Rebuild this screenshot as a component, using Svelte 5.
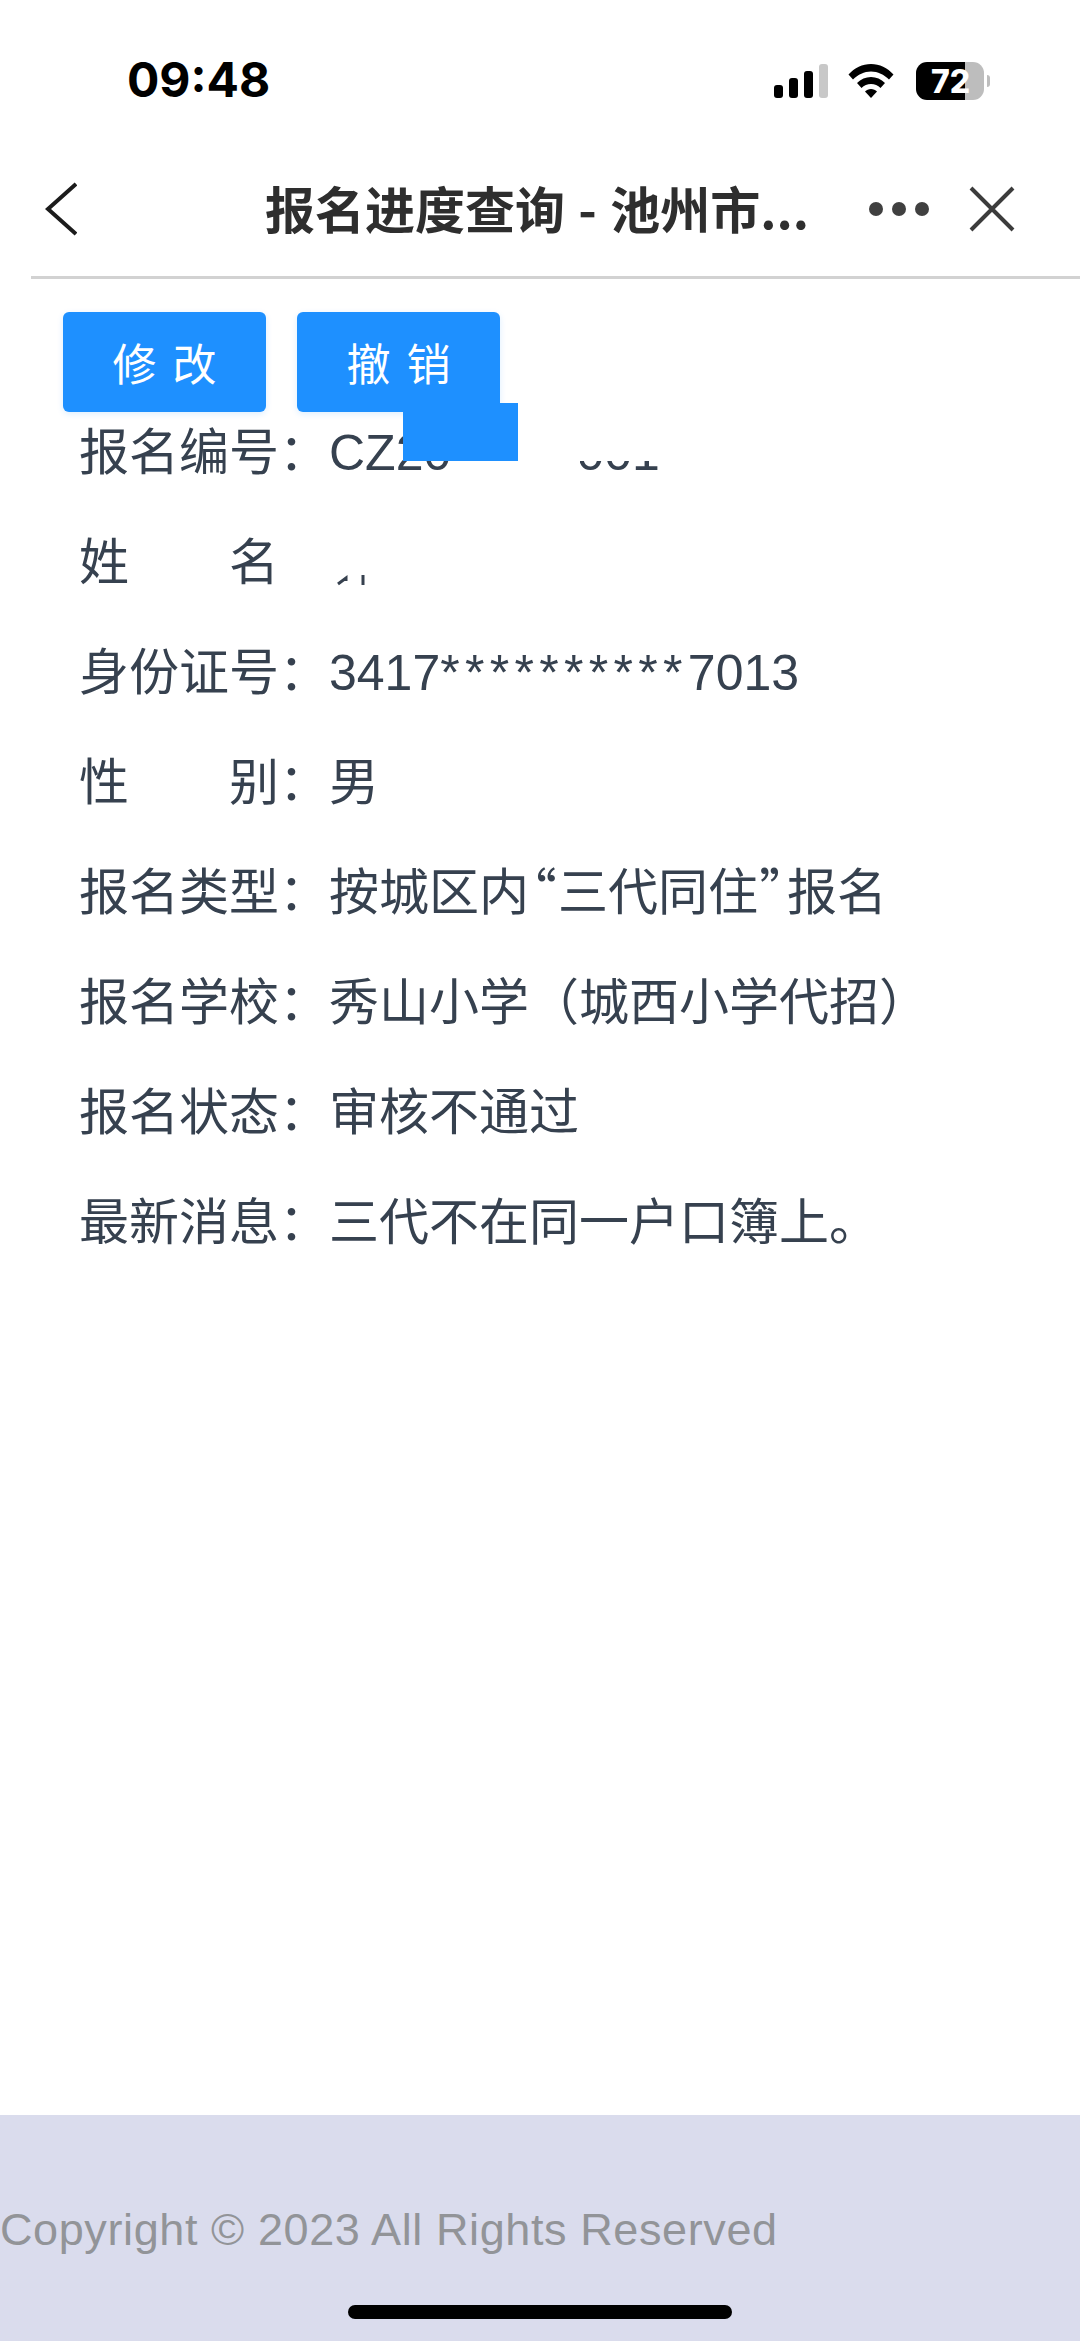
<script>
  const rows = [
    { label: '报名编号', value: 'CZ20 2300001', colon: true },
    { label: '姓名', value: '', colon: false },
    { label: '身份证号', value: '3417**********7013', colon: true },
    { label: '性别', value: '男', colon: true },
    { label: '报名类型', value: '按城区内“三代同住”报名', colon: true },
    { label: '报名学校', value: '秀山小学（城西小学代招）', colon: true },
    { label: '报名状态', value: '审核不通过', colon: true },
    { label: '最新消息', value: '三代不在同一户口簿上。', colon: true }
  ];

  // 引号和星号在原图里更宽，单独包一层
  function split(value) {
    return value.split(/(“|”|\*+)/).filter(Boolean);
  }
</script>

<div class="page">
  <div class="status">
    <span class="time">09:48</span>
    <div class="status-icons">
      <div class="signal">
        <i style="height: 13px"></i>
        <i style="height: 20px"></i>
        <i style="height: 27px"></i>
        <i class="off" style="height: 34px"></i>
      </div>
      <svg class="wifi" width="46" height="34" viewBox="0 0 46 34">
        <path d="M0.5 10.5C6.5 4 14.5 0 23 0s16.5 4 22.500 10.500l-4.500 5C36 10.500 29.800 7.500 23 7.500S10 10.500 5 15.500z" fill="#000"/>
        <path d="M9 19C12.800 15 17.800 13 23 13s10.200 2 14 6l-4.500 5C30 21.500 26.600 20 23 20s-7 1.500-9.500 4z" fill="#000"/>
        <path d="M17 27.500C18.500 26 20.700 25 23 25s4.500 1 6 2.500L23 34z" fill="#000"/>
      </svg>
      <div class="battery">
        <div class="battery-body"><span>72</span></div>
        <div class="battery-nub"></div>
      </div>
    </div>
  </div>

  <div class="nav">
    <svg class="back" width="32" height="54" viewBox="0 0 32 54">
      <path d="M31 2 3 27l28 25" fill="none" stroke="#1c1c1c" stroke-width="4"/>
    </svg>
    <div class="title">报名进度查询 - 池州市...</div>
    <div class="dots"><i></i><i></i><i></i></div>
    <svg class="close" width="46" height="46" viewBox="0 0 46 46">
      <path d="M2 2l42 42M44 2 2 44" fill="none" stroke="#3c3c3c" stroke-width="4"/>
    </svg>
  </div>

  <div class="content">
    <div class="actions">
      <button class="btn">修 改</button>
      <button class="btn">撤 销</button>
    </div>

    <div class="info">
      {#each rows as row}
        <div class="row">
          <span class="label">{row.label}</span>
          <span class="colon">{row.colon ? '：' : ''}</span>
          <span class="value">{#each split(row.value) as part}{#if part[0] === '*'}<span class="stars">{part}</span>{:else if part === '“' || part === '”'}<span class="quote">{part}</span>{:else}{part}{/if}{/each}</span>
        </div>
      {/each}
    </div>

    <!-- 打码遮挡 -->
    <div class="mask-white-top"></div>
    <div class="mask-white-bottom"></div>
    <div class="mask-blue"></div>
    <svg class="name-bits" width="30" height="12" viewBox="0 0 30 12">
      <path d="M2 10 10 4v3M27 1v10" fill="none" stroke="#36414f" stroke-width="3"/>
    </svg>
  </div>

  <div class="footer">
    <span class="copyright">Copyright © 2023 All Rights Reserved</span>
    <div class="home-bar"></div>
  </div>
</div>

<style>
  :global(body) {
    margin: 0;
    background: #fff;
  }

  .page {
    display: flex;
    flex-direction: column;
    width: 1080px;
    height: 2341px;
    font-family: "Liberation Sans", "Noto Sans CJK SC", sans-serif;
    overflow: hidden;
  }

  .status {
    display: flex;
    align-items: center;
    justify-content: space-between;
    height: 36px;
    padding: 62px 90px 0 127px;
  }

  .time {
    font-family: Inter, sans-serif;
    font-size: 48px;
    font-weight: 700;
    line-height: 36px;
    color: #000;
  }

  .status-icons {
    display: flex;
    align-items: flex-end;
  }

  .signal {
    display: flex;
    align-items: flex-end;
    gap: 6px;
    margin-right: 20px;
  }

  .signal i {
    width: 9px;
    border-radius: 3px;
    background: #000;
  }

  .signal i.off {
    background: #c8c8c8;
  }

  .wifi {
    margin-right: 22px;
  }

  .battery {
    display: flex;
    align-items: center;
    margin-bottom: -2px;
  }

  .battery-body {
    display: flex;
    align-items: center;
    width: 68px;
    height: 38px;
    padding-left: 15px;
    box-sizing: border-box;
    border-radius: 11px;
    background: linear-gradient(to right, #000 72%, #bdbdbd 72%);
  }

  .battery-body span {
    font-family: Inter, sans-serif;
    font-size: 32px;
    font-weight: 800;
    color: #fff;
  }

  .battery-nub {
    width: 3px;
    height: 12px;
    margin-left: 3px;
    border-radius: 0 3px 3px 0;
    background: #bdbdbd;
  }

  .nav {
    display: flex;
    align-items: center;
    height: 181px;
    padding-top: 44px;
    margin-left: 31px;
    border-bottom: 3px solid #d2d2d2;
    box-sizing: border-box;
  }

  .back {
    margin-left: 14px;
  }

  .title {
    width: 560px;
    margin: -4px 0 0 188px;
    font-family: "Noto Sans CJK SC", sans-serif;
    font-size: 50px;
    font-weight: 700;
    word-spacing: 2px;
    color: #2e2e2e;
    white-space: nowrap;
  }

  .dots {
    display: flex;
    gap: 9px;
    margin-left: 44px;
  }

  .dots i {
    width: 14px;
    height: 14px;
    border-radius: 50%;
    background: #404040;
  }

  .close {
    margin-left: 40px;
  }

  .content {
    position: relative;
    flex: 1;
  }

  .actions {
    display: flex;
    gap: 31px;
    padding: 33px 0 0 63px;
  }

  .btn {
    width: 203px;
    height: 100px;
    padding: 0;
    border: none;
    border-radius: 6px;
    background: #1e90ff;
    box-shadow: 0 2px 6px rgba(30, 144, 255, 0.15);
    font-family: "Noto Sans CJK SC", sans-serif;
    font-size: 44px;
    word-spacing: 6px;
    color: #fff;
  }

  .info {
    display: flex;
    flex-direction: column;
    gap: 30px;
    margin-top: -4px;
    padding: 0 0 0 79px;
  }

  .row {
    display: flex;
    align-items: baseline;
    height: 80px;
    font-family: "Noto Sans CJK SC", sans-serif;
    font-size: 50px;
    line-height: 80px;
    color: #36414f;
  }

  .label {
    width: 200px;
    text-align: justify;
    text-align-last: justify;
  }

  .colon {
    width: 50px;
  }

  .value {
    font-family: "Liberation Sans", "Noto Sans CJK SC", sans-serif;
    white-space: nowrap;
  }

  .stars {
    letter-spacing: 5.3px;
  }

  .quote {
    font-family: "Noto Sans CJK SC", sans-serif;
    font-feature-settings: "palt";
    padding: 0 2px;
  }

  .mask-white-top {
    position: absolute;
    left: 518px;
    top: 124px;
    width: 160px;
    height: 58px;
    background: #fff;
  }

  .mask-white-bottom {
    position: absolute;
    left: 460px;
    top: 182px;
    width: 120px;
    height: 50px;
    background: #fff;
  }

  .mask-blue {
    position: absolute;
    left: 403px;
    top: 124px;
    width: 115px;
    height: 58px;
    background: #1e90ff;
  }

  .name-bits {
    position: absolute;
    left: 336px;
    top: 295px;
  }

  .footer {
    position: relative;
    display: flex;
    align-items: center;
    height: 226px;
    background: #dadced;
  }

  .copyright {
    font-size: 45px;
    letter-spacing: 0.6px;
    color: #929498;
    white-space: nowrap;
    margin-top: 4px;
  }

  .home-bar {
    position: absolute;
    left: 348px;
    bottom: 22px;
    width: 384px;
    height: 14px;
    border-radius: 7px;
    background: #000;
  }
</style>
